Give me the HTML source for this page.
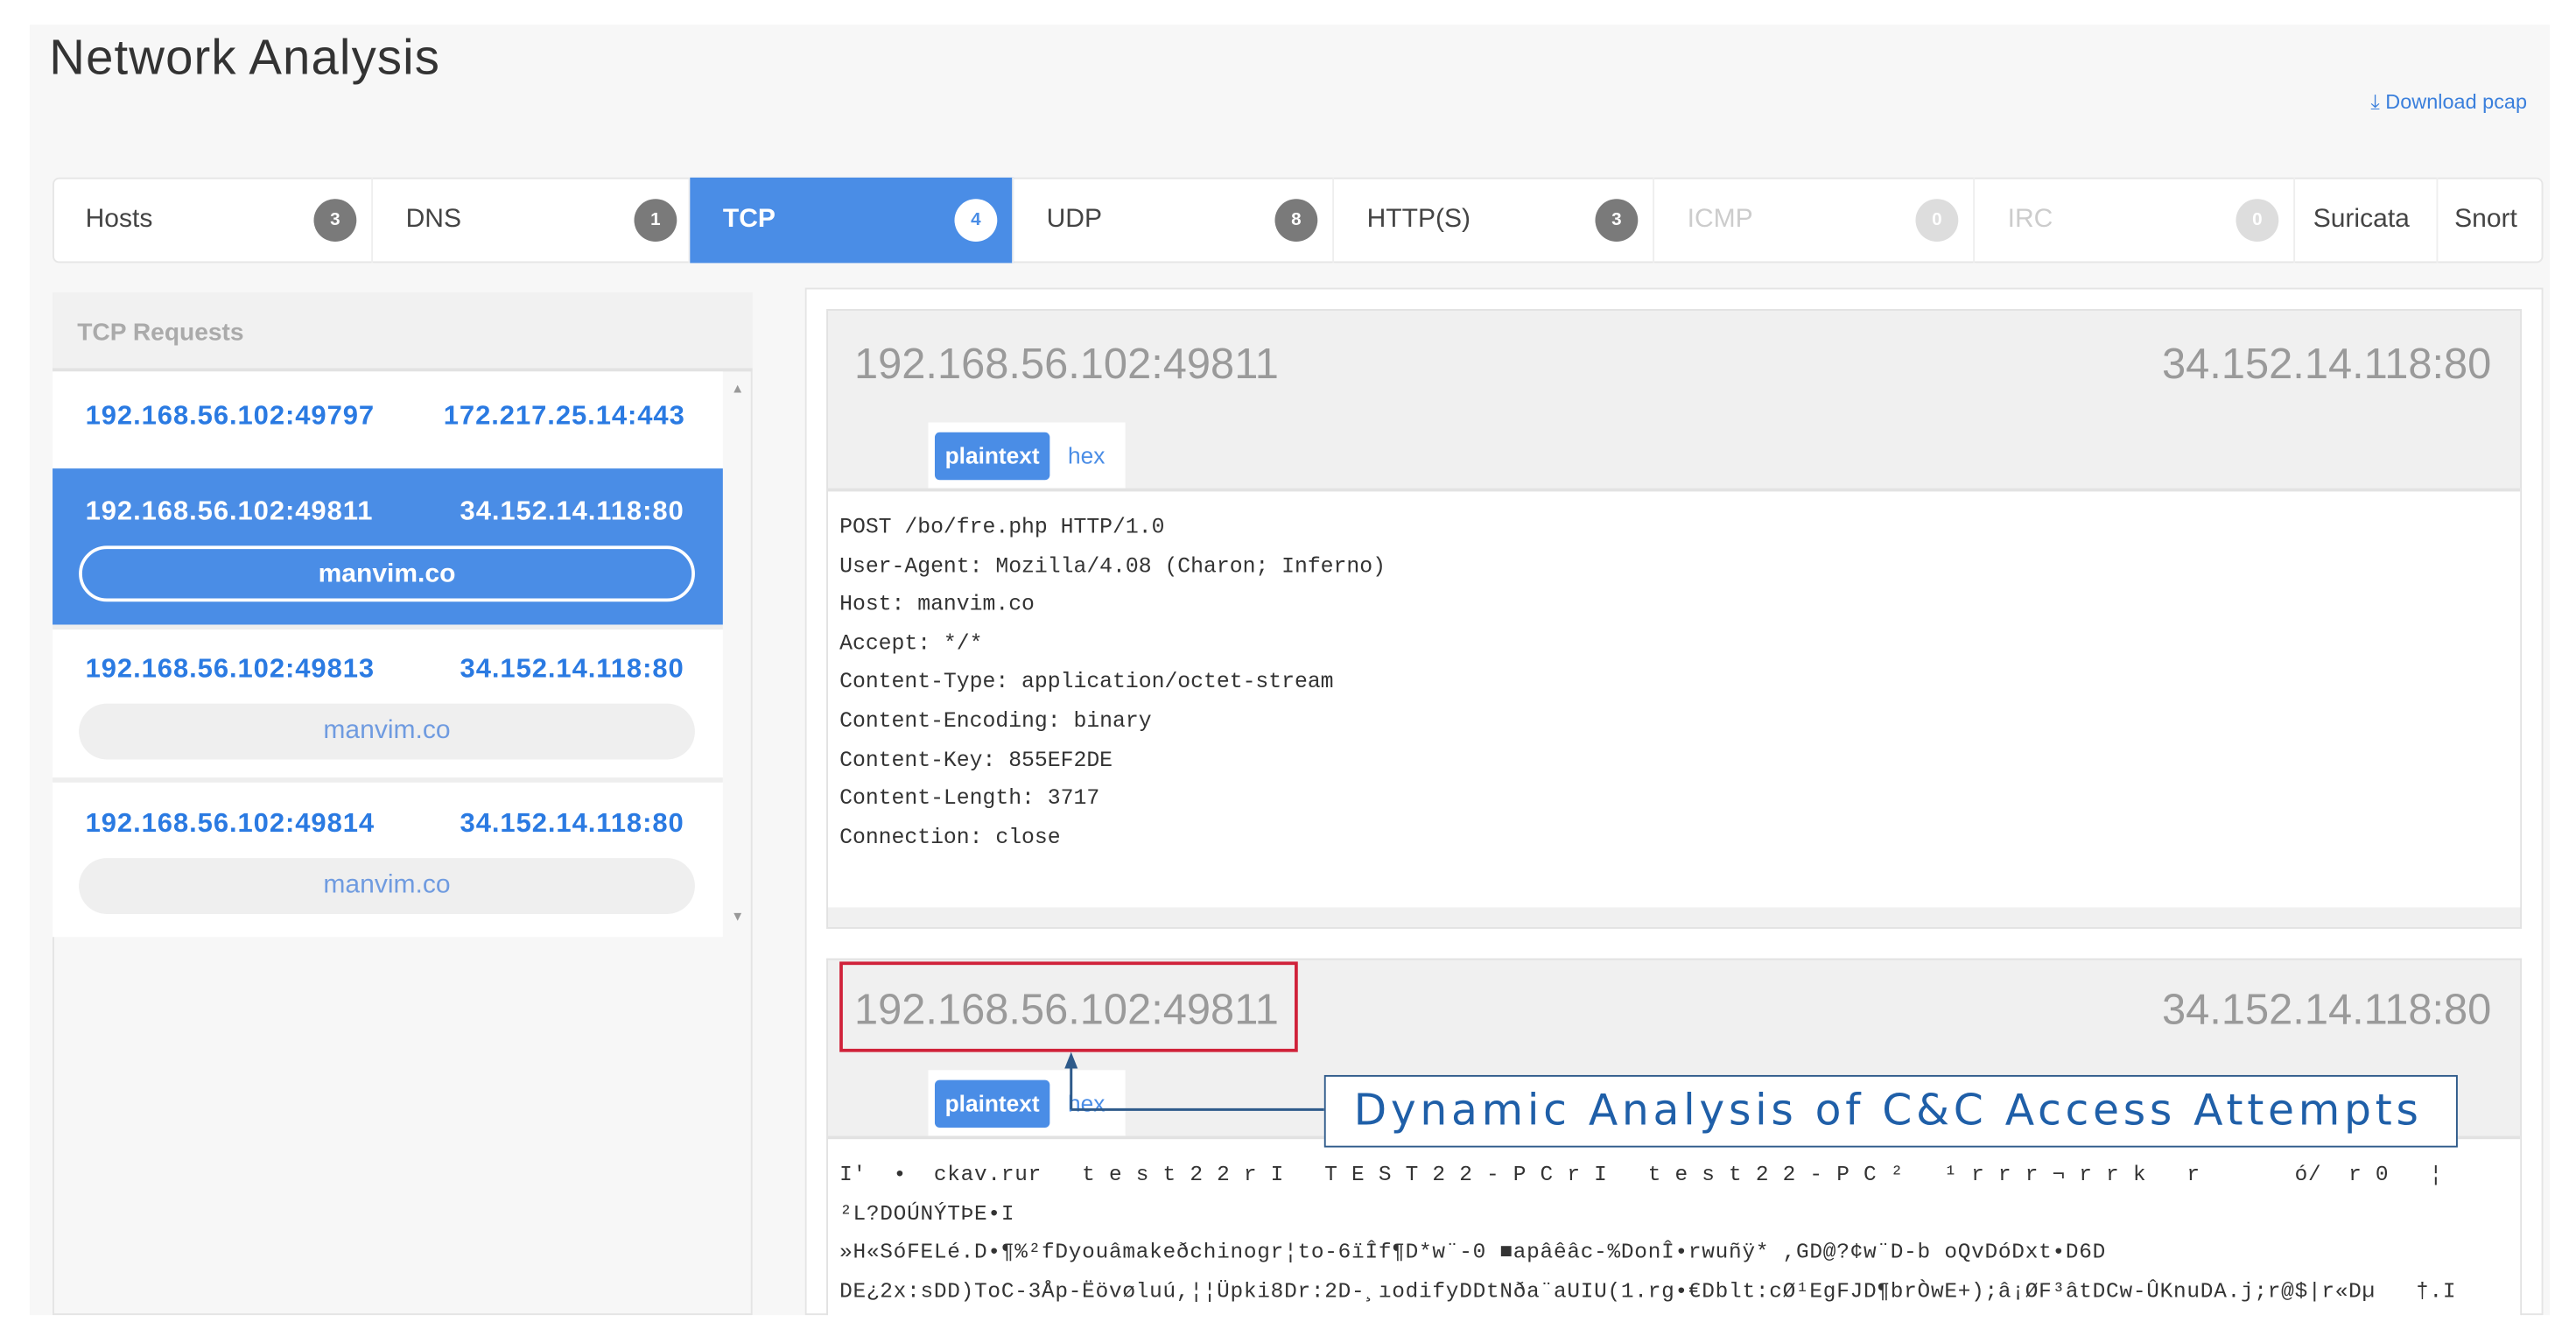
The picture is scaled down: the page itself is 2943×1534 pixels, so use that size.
<!DOCTYPE html>
<html><head><meta charset="utf-8">
<style>
html,body{margin:0;padding:0;background:#fff;width:2943px;height:1534px;overflow:hidden}
#s{position:absolute;left:0;top:0;width:1568px;height:817px;transform-origin:0 0;transform:scale(1.87692,1.8776);font-family:"Liberation Sans",sans-serif}
.a{position:absolute}
.tab{position:absolute;top:108px;height:52px;line-height:52px;font-size:16px;color:#444;box-sizing:border-box;padding-left:20px;border-right:1px solid #eee}
.b{position:absolute;top:13px;width:26px;height:26px;border-radius:50%;background:#7a7a7a;color:#fff;font-size:11px;line-height:26px;text-align:center;font-weight:bold}
.ip{position:absolute;font-size:16.5px;font-weight:bold;color:#2a7ae2;letter-spacing:0.5px}
.pill{position:absolute;left:48px;width:375px;height:34px;border-radius:17px;background:#efefef;text-align:center;line-height:34px;font-size:16px;color:#6f9be0}
.mono{font-family:"Liberation Mono","DejaVu Sans Mono",monospace;font-size:13.2px;color:#333;white-space:pre;position:absolute;left:511px}
.big{position:absolute;font-size:26px;color:#9a9a9a}
</style></head><body><div id="s">
<div class="a" style="left:18px;top:15px;width:1534px;height:785px;background:#f7f7f7"></div>
<div class="a" style="left:30px;top:19px;font-size:30px;color:#333;letter-spacing:0.6px">Network Analysis</div>
<div class="a" style="left:1443px;top:55px;font-size:12.5px;color:#3a7fdc">⤓ Download pcap</div>

<div class="a" style="left:32px;top:108px;width:1516px;height:52px;background:#fff;border:1px solid #e6e6e6;box-sizing:border-box;border-radius:4px"></div>
<div class="tab" style="left:32px;width:195px">Hosts<div class="b" style="left:159px">3</div></div>
<div class="tab" style="left:227px;width:193px">DNS<div class="b" style="left:159px">1</div></div>
<div class="tab" style="left:420px;width:197px;background:#4a8de6;color:#fff;font-weight:bold">TCP<div class="b" style="left:161px;background:#fff;color:#4a8de6">4</div></div>
<div class="tab" style="left:617px;width:195px">UDP<div class="b" style="left:159px">8</div></div>
<div class="tab" style="left:812px;width:195px">HTTP(S)<div class="b" style="left:159px">3</div></div>
<div class="tab" style="left:1007px;width:195px;color:#ccc">ICMP<div class="b" style="left:159px;background:#ddd">0</div></div>
<div class="tab" style="left:1202px;width:195px;color:#ccc">IRC<div class="b" style="left:159px;background:#ddd">0</div></div>
<div class="tab" style="left:1397px;width:87px;padding-left:11px">Suricata</div>
<div class="tab" style="left:1484px;width:64px;padding-left:10px;border:none">Snort</div>

<div class="a" style="left:32px;top:178px;width:426px;height:622px;border:1px solid #e4e4e4;box-sizing:border-box;background:#f7f7f7"></div>
<div class="a" style="left:32px;top:178px;width:426px;height:48px;background:#f1f1f1;border-bottom:2px solid #e2e2e2;box-sizing:border-box;font-size:15px;font-weight:bold;color:#aaa;line-height:50px;padding-left:15px">TCP Requests</div>
<div class="a" style="left:32px;top:226px;width:408px;height:344px;background:#fff"></div>
<div class="a" style="left:445px;top:232px;font-size:8px;color:#999">▲</div>
<div class="a" style="left:445px;top:553px;font-size:8px;color:#999">▼</div>
<div class="ip" style="left:52px;top:244px">192.168.56.102:49797</div><div class="ip" style="left:270px;top:244px">172.217.25.14:443</div>
<div class="a" style="left:32px;top:285px;width:408px;height:95px;background:#4a8de6"></div>
<div class="ip" style="left:52px;top:302px;color:#fff">192.168.56.102:49811</div><div class="ip" style="left:280px;top:302px;color:#fff">34.152.14.118:80</div>
<div class="pill" style="top:332px;background:none;border:2px solid #fff;box-sizing:border-box;color:#fff;font-weight:bold;line-height:31px">manvim.co</div>
<div class="a" style="left:32px;top:380px;width:408px;height:3px;background:#eee"></div>
<div class="ip" style="left:52px;top:398px">192.168.56.102:49813</div><div class="ip" style="left:280px;top:398px">34.152.14.118:80</div>
<div class="pill" style="top:428px">manvim.co</div>
<div class="a" style="left:32px;top:473px;width:408px;height:3px;background:#eee"></div>
<div class="ip" style="left:52px;top:492px">192.168.56.102:49814</div><div class="ip" style="left:280px;top:492px">34.152.14.118:80</div>
<div class="pill" style="top:522px">manvim.co</div>

<div class="a" style="left:490px;top:175px;width:1058px;height:625px;border:1px solid #e4e4e4;box-sizing:border-box;background:#fff"></div>
<div class="a" style="left:503px;top:188px;width:1032px;height:377px;background:#f0f0f0;border:1px solid #e2e2e2;box-sizing:border-box"></div>
<div class="big" style="left:520px;top:206px">192.168.56.102:49811</div>
<div class="big" style="left:1316px;top:206px">34.152.14.118:80</div>
<div class="a" style="left:565px;top:257px;width:120px;height:42px;background:#fff"></div>
<div class="a" style="left:569px;top:263px;width:70px;height:29px;background:#4a8de6;border-radius:3px;color:#fff;font-weight:bold;font-size:14px;text-align:center;line-height:29px">plaintext</div>
<div class="a" style="left:650px;top:269px;color:#4a8de6;font-size:14px">hex</div>
<div class="a" style="left:504px;top:297px;width:1030px;height:253px;background:#fff;border-top:2px solid #e2e2e2"></div>
<div class="mono" style="top:309px;line-height:23.6px">POST /bo/fre.php HTTP/1.0
User-Agent: Mozilla/4.08 (Charon; Inferno)
Host: manvim.co
Accept: */*
Content-Type: application/octet-stream
Content-Encoding: binary
Content-Key: 855EF2DE
Content-Length: 3717
Connection: close</div>

<div class="a" style="left:503px;top:583px;width:1032px;height:217px;background:#f0f0f0;border:1px solid #e2e2e2;border-bottom:none;box-sizing:border-box"></div>
<div class="big" style="left:520px;top:599px">192.168.56.102:49811</div>
<div class="big" style="left:1316px;top:599px">34.152.14.118:80</div>
<div class="a" style="left:511px;top:585px;width:279px;height:55px;border:2px solid #d0223a;box-sizing:border-box"></div>
<div class="a" style="left:565px;top:651px;width:120px;height:42px;background:#fff"></div>
<div class="a" style="left:569px;top:657px;width:70px;height:29px;background:#4a8de6;border-radius:3px;color:#fff;font-weight:bold;font-size:14px;text-align:center;line-height:29px">plaintext</div>
<div class="a" style="left:650px;top:663px;color:#4a8de6;font-size:14px">hex</div>
<div class="a" style="left:504px;top:691px;width:1030px;height:109px;background:#fff;border-top:2px solid #e2e2e2"></div>
<svg class="a" style="left:640px;top:638px" width="170" height="45"><path d="M12 37 V6 M12 37 H166" stroke="#2e5a8a" stroke-width="1.6" fill="none"/><path d="M12 2 L8 12 H16 Z" fill="#2e5a8a"/></svg>
<div class="a" style="left:806px;top:654px;width:690px;height:44px;border:1.5px solid #2e5a8a;box-sizing:border-box;background:#fff;font-family:'DejaVu Sans',sans-serif;font-size:26px;color:#1f5fa8;line-height:42px;padding-left:17px;letter-spacing:2.5px;white-space:nowrap">Dynamic Analysis of C&amp;C Access Attempts</div>
<div class="mono" style="top:703px;line-height:23.6px;font-size:13px;letter-spacing:0.4px">I'  •  ckav.rur   t e s t 2 2 r I   T E S T 2 2 - P C r I   t e s t 2 2 - P C ²   ¹ r r r ¬ r r k   r       ó/  r 0   ¦
²L?DOÚNÝTÞE•I
»H«SóFELé.D•¶%²fDyouâmakeðchinogr¦to-6ïÎf¶D*w¨-0 ■apâêâc-%DonÎ•rwuñÿ* ,GD@?¢w¨D-b oQvDóDxt•D6D
DE¿2x:sDD)ToC-3Åp-Ëövøluú,¦¦Üpki8Dr:2D-¸ıodifyDDtNða¨aUIU(1.rg•€Dblt:cØ¹EgFJD¶brÒwE+);â¡ØF³âtDCw-ÛKnuDA.j;r@$|r«Dµ   †.I</div>
</div></body></html>
